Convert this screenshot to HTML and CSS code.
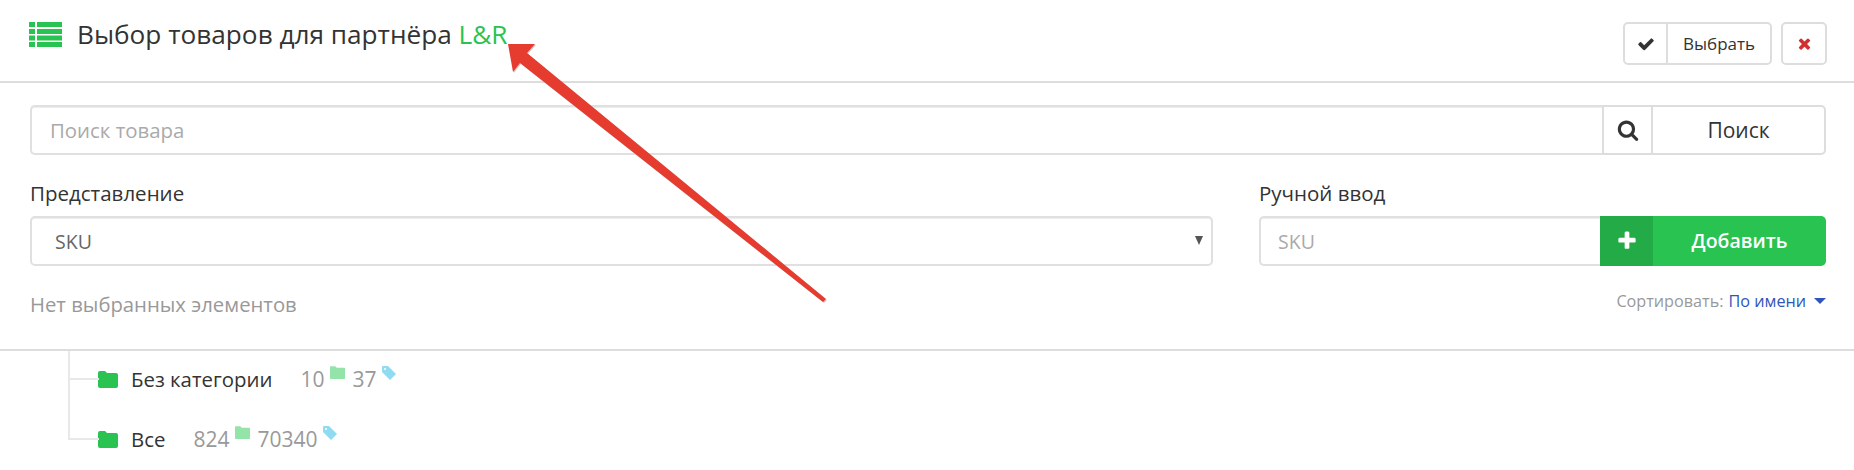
FILE: index.html
```html
<!DOCTYPE html>
<html lang="en">
<head>
    <meta charset="UTF-8">
    <title>Выбор товаров</title>
    <link rel="stylesheet" href="styles.css">
</head>
<body>
    <header class="page-header">
        <div class="page-title">
            <svg class="title-icon" viewBox="0 0 33 25">
                <path d="M0 0h6v5H0zM8 0h25v5H8zM0 7h6v5H0zM8 7h25v5H8zM0 13.500h6v5H0zM8 13.500h25v5H8zM0 20h6v5H0zM8 20h25v5H8z"/>
            </svg>
            <h1>Выбор товаров для партнёра <span class="accent">L&amp;R</span></h1>
        </div>
        <div class="header-actions">
            <button class="btn btn-split">
                <span class="btn-icon">
                    <svg class="icon-check" viewBox="0 0 1792 1792"><path d="M1671 566q0 40-28 68l-724 724-136 136q-28 28-68 28t-68-28l-136-136-362-362q-28-28-28-68t28-68l136-136q28-28 68-28t68 28l294 295 656-657q28-28 68-28t68 28l136 136q28 28 28 68z"/></svg>
                </span>
                <span class="btn-text">Выбрать</span>
            </button>
            <button class="btn btn-close">
                <svg class="icon-close" viewBox="0 0 1792 1792"><path d="M1490 1322q0 40-28 68l-136 136q-28 28-68 28t-68-28l-294-294-294 294q-28 28-68 28t-68-28l-136-136q-28-28-28-68t28-68l294-294-294-294q-28-28-28-68t28-68l136-136q28-28 68-28t68 28l294 294 294-294q28-28 68-28t68 28l136 136q28 28 28 68t-28 68l-294 294 294 294q28 28 28 68z"/></svg>
            </button>
        </div>
    </header>

    <section class="filters">
        <div class="search-row">
            <input class="field search-input" type="text" placeholder="Поиск товара">
            <span class="search-icon">
                <svg viewBox="0 0 1792 1792"><path d="M1216 832q0-185-131.500-316.500t-316.500-131.500-316.500 131.500-131.500 316.500 131.500 316.500 316.500 131.500 316.500-131.500 131.500-316.500zm512 832q0 52-38 90t-90 38q-54 0-90-38l-343-342q-179 124-399 124-143 0-273.500-55.500t-225-150-150-225-55.500-273.500 55.500-273.500 150-225 225-150 273.500-55.500 273.500 55.500 225 150 150 225 55.500 273.500q0 220-124 399l343 343q37 37 37 90z"/></svg>
            </span>
            <button class="search-btn">Поиск</button>
        </div>

        <div class="form-grid">
            <div class="form-col">
                <label class="form-label">Представление</label>
                <div class="select-wrap">
                    <select class="field select-field">
                        <option>SKU</option>
                    </select>
                </div>
                <p class="empty-note">Нет выбранных элементов</p>
            </div>
            <div class="form-col">
                <label class="form-label">Ручной ввод</label>
                <div class="manual-row">
                    <input class="field manual-input" type="text" placeholder="SKU">
                    <button class="add-btn">
                        <span class="add-icon">
                            <svg viewBox="0 0 1792 1792"><path d="M1600 736v192q0 40-28 68t-68 28h-416v416q0 40-28 68t-68 28h-192q-40 0-68-28t-28-68v-416h-416q-40 0-68-28t-28-68v-192q0-40 28-68t68-28h416v-416q0-40 28-68t68-28h192q40 0 68 28t28 68v416h416q40 0 68 28t28 68z"/></svg>
                        </span>
                        <span class="add-text">Добавить</span>
                    </button>
                </div>
                <div class="sort-row">
                    Сортировать: <a href="#" class="sort-link">По имени</a><span class="sort-caret"></span>
                </div>
            </div>
        </div>
    </section>

    <ul class="tree">
        <li class="tree-item">
            <svg class="folder" viewBox="0 0 20 17"><path d="M2 0h5l2 2h9a2 2 0 0 1 2 2v11a2 2 0 0 1-2 2H2a2 2 0 0 1-2-2V2a2 2 0 0 1 2-2z"/></svg>
            <span class="tree-name">Без категории</span>
            <span class="count">10</span>
            <svg class="mini-folder" viewBox="0 0 20 17"><path d="M1 0h6l2 2h10a1 1 0 0 1 1 1v13a1 1 0 0 1-1 1H1a1 1 0 0 1-1-1V1a1 1 0 0 1 1-1z"/></svg>
            <span class="count">37</span>
            <svg class="mini-tag" viewBox="0 0 14 14"><path d="M1 0h5l8 8-6 6-8-8V1a1 1 0 0 1 1-1zm2 2a1 1 0 1 0 0 2 1 1 0 0 0 0-2z" fill-rule="evenodd"/></svg>
        </li>
        <li class="tree-item">
            <svg class="folder" viewBox="0 0 20 17"><path d="M2 0h5l2 2h9a2 2 0 0 1 2 2v11a2 2 0 0 1-2 2H2a2 2 0 0 1-2-2V2a2 2 0 0 1 2-2z"/></svg>
            <span class="tree-name">Все</span>
            <span class="count">824</span>
            <svg class="mini-folder" viewBox="0 0 20 17"><path d="M1 0h6l2 2h10a1 1 0 0 1 1 1v13a1 1 0 0 1-1 1H1a1 1 0 0 1-1-1V1a1 1 0 0 1 1-1z"/></svg>
            <span class="count">70340</span>
            <svg class="mini-tag" viewBox="0 0 14 14"><path d="M1 0h5l8 8-6 6-8-8V1a1 1 0 0 1 1-1zm2 2a1 1 0 1 0 0 2 1 1 0 0 0 0-2z" fill-rule="evenodd"/></svg>
        </li>
    </ul>

    <!-- annotation drawn over the page -->
    <svg class="annotation" viewBox="0 0 1854 470">
        <polygon class="annotation-shadow" points="508,44 535,44 527,53 826,299 823,302 520,63 513,72"/>
        <polygon class="annotation-arrow" points="508,44 535,44 527,53 826,299 823,302 520,63 513,72"/>
    </svg>
</body>
</html>
```

FILE: styles.css
```css
* {
    margin: 0;
    padding: 0;
    box-sizing: border-box;
}

body {
    font-family: "Open Sans", "Noto Sans", sans-serif;
    background: #fff;
    color: #333;
    height: 470px;
    overflow: hidden;
    position: relative;
}

button {
    font-family: inherit;
    background: #fff;
    color: #333;
    cursor: pointer;
}

.page-header {
    height: 83px;
    border-bottom: 2px solid #ddd;
    padding: 22px 27px 0 29px;
    display: flex;
    justify-content: space-between;
    align-items: flex-start;
}

.page-title {
    display: flex;
    align-items: flex-start;
    gap: 15px;
}

.title-icon {
    width: 33px;
    height: 25px;
    fill: #28c350;
}

.page-title h1 {
    font-size: 26.200px;
    font-weight: 400;
    line-height: 26px;
    margin-top: -1px;
    white-space: nowrap;
}

.accent {
    color: #28c350;
}

.header-actions {
    display: flex;
    gap: 9px;
}

.btn {
    height: 43px;
    border: 2px solid #ddd;
    border-radius: 5px;
    font-size: 17px;
    display: flex;
    align-items: stretch;
}

.btn-split {
    width: 149px;
}

.btn-icon {
    width: 43px;
    border-right: 2px solid #ddd;
    display: flex;
    align-items: center;
    justify-content: center;
}

.icon-check {
    width: 18px;
    height: 18px;
    fill: #333;
}

.btn-text {
    flex: 1;
    line-height: 39px;
    text-align: center;
}

.btn-close {
    width: 46px;
    align-items: center;
    justify-content: center;
}

.icon-close {
    width: 17px;
    height: 17px;
    fill: #d0302f;
}

.filters {
    padding: 22px 28px 0 30px;
    height: 268px;
    border-bottom: 2px solid #ddd;
}

.field {
    height: 50px;
    border: 2px solid #e0e0e0;
    border-radius: 5px;
    box-shadow: inset 0 1px 0 #eee;
    font-family: inherit;
    font-size: 19.500px;
    color: #666;
    background: #fff;
    outline: none;
}

.field::placeholder {
    color: #aaa;
    opacity: 1;
}

.search-row {
    display: flex;
    height: 50px;
}

.search-input {
    flex: 1;
    padding-left: 18px;
    border-right: none;
    border-radius: 5px 0 0 5px;
    font-size: 20.400px;
}

.search-icon {
    width: 51px;
    border: 2px solid #ddd;
    display: flex;
    align-items: center;
    justify-content: center;
}

.search-icon svg {
    width: 22px;
    height: 22px;
    fill: #333;
}

.search-btn {
    width: 173px;
    border: 2px solid #ddd;
    border-left: none;
    border-radius: 0 5px 5px 0;
    font-size: 21px;
}

.form-grid {
    display: grid;
    grid-template-columns: 1183px 567px;
    column-gap: 46px;
    margin-top: 25px;
}

.form-label {
    display: block;
    font-size: 20.500px;
    line-height: 26px;
    margin-bottom: 10px;
}

.select-wrap {
    position: relative;
}

.select-wrap::after {
    content: "";
    position: absolute;
    right: 10px;
    top: 20px;
    border-left: 4px solid transparent;
    border-right: 4px solid transparent;
    border-top: 9px solid #555;
}

.select-field {
    width: 100%;
    padding-left: 23px;
    appearance: none;
}

.empty-note {
    font-size: 20.300px;
    line-height: 24px;
    color: #999;
    margin-top: 26px;
}

.manual-row {
    display: flex;
    height: 50px;
}

.manual-input {
    flex: 1;
    min-width: 0;
    padding-left: 17px;
    border-right: none;
    border-radius: 5px 0 0 5px;
}

.add-btn {
    width: 226px;
    border: none;
    border-radius: 0 5px 5px 0;
    background: #28c350;
    color: #fff;
    display: flex;
    overflow: hidden;
}

.add-icon {
    width: 53px;
    height: 100%;
    background: #23ab47;
    display: flex;
    align-items: center;
    justify-content: center;
}

.add-icon svg {
    width: 22px;
    height: 22px;
    fill: #fff;
}

.add-text {
    flex: 1;
    font-size: 19.500px;
    font-weight: 600;
    line-height: 50px;
    text-align: center;
}

.sort-row {
    margin-top: 24px;
    font-size: 16.200px;
    line-height: 22px;
    color: #999;
    display: flex;
    justify-content: flex-end;
    align-items: center;
    gap: 5px;
}

.sort-link {
    color: #2f55b8;
    text-decoration: none;
}

.sort-caret {
    margin-left: 3px;
    border-left: 6px solid transparent;
    border-right: 6px solid transparent;
    border-top: 6px solid #2f55b8;
}

.tree {
    list-style: none;
    padding-left: 68px;
}

.tree-item {
    position: relative;
    height: 60px;
    padding: 18px 0 0 30px;
    display: flex;
    align-items: flex-start;
    font-size: 20.400px;
    line-height: 20px;
}

/* connector lines */
.tree-item::before {
    content: "";
    position: absolute;
    left: 0;
    top: 0;
    width: 29px;
    height: 27px;
    border-left: 2px solid #e8e8e8;
    border-bottom: 2px solid #e8e8e8;
}

.tree-item:not(:last-child)::after {
    content: "";
    position: absolute;
    left: 0;
    top: 27px;
    bottom: 0;
    border-left: 2px solid #e8e8e8;
}

.folder {
    width: 20px;
    height: 17px;
    margin: 2px 13px 0 0;
    fill: #28c350;
}

.tree-name {
    margin-right: 28px;
}

.count {
    color: #999;
    font-size: 21px;
}

.mini-folder {
    width: 15px;
    height: 13px;
    margin: -3px 7px 0 6px;
    fill: #94e3a8;
}

.mini-tag {
    width: 14px;
    height: 14px;
    margin: -3px 0 0 6px;
    fill: #8fdcf2;
}

.annotation {
    position: absolute;
    left: 0;
    top: 0;
    width: 1854px;
    height: 470px;
    pointer-events: none;
}

.annotation-shadow {
    fill: #ccc;
    transform: translate(1px, 1px);
}

.annotation-arrow {
    fill: #e63c2f;
}
```
